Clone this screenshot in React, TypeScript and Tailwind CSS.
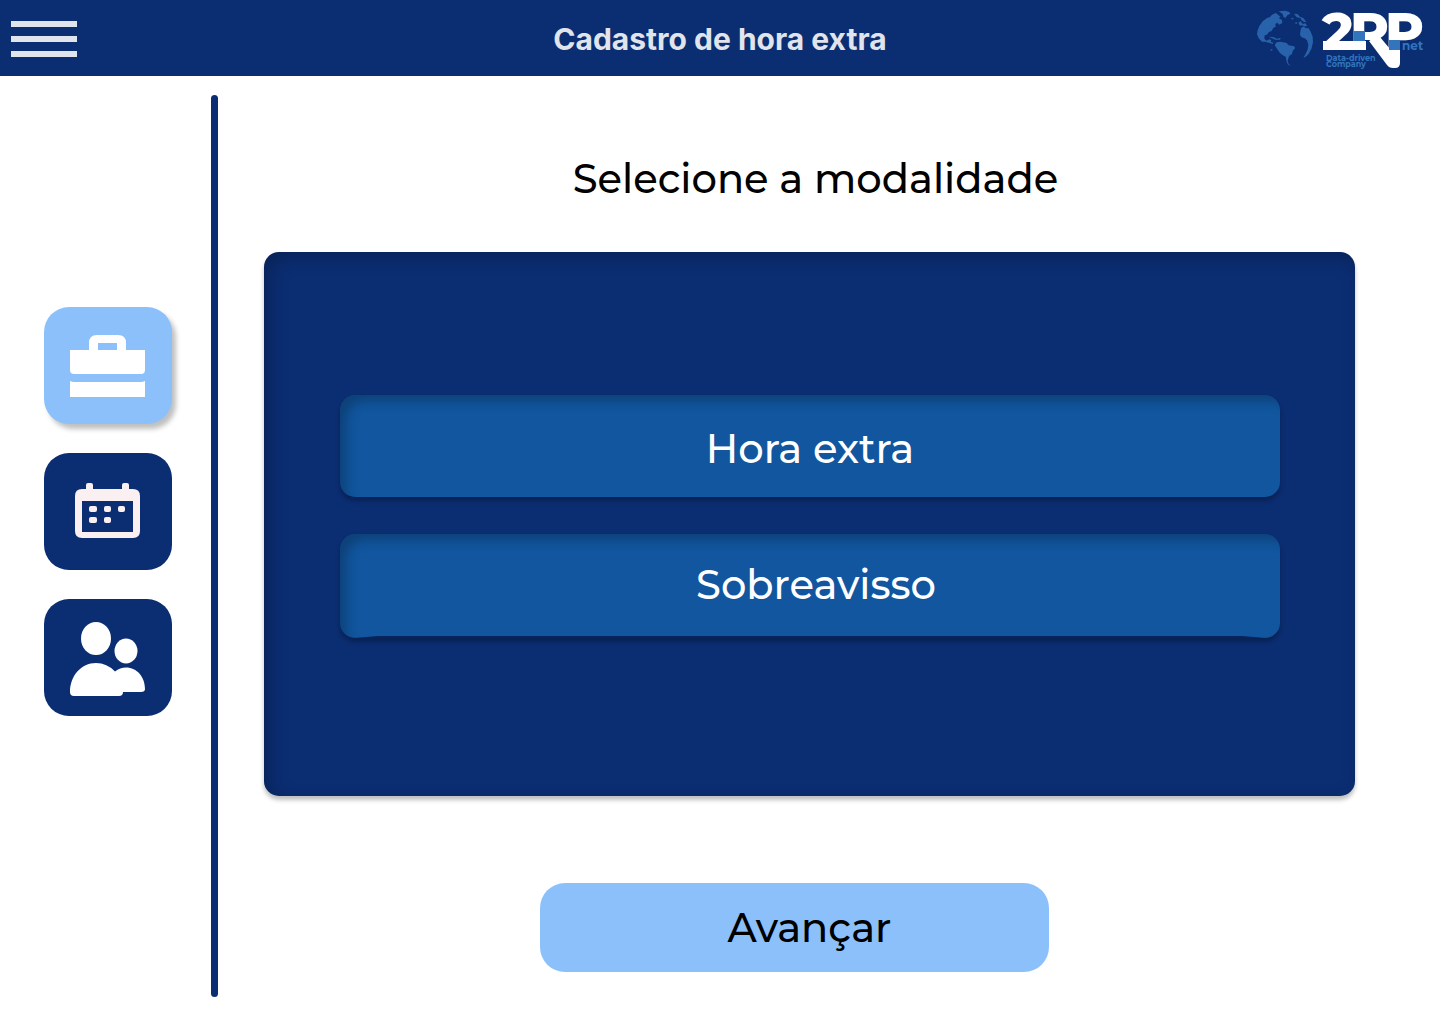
import React from "react";

function Logo() {
  return (
    <svg viewBox="0 -10 170 76" className="h-[76px] w-[170px] overflow-visible" role="img" aria-label="2RP net Data-driven Company">
      <g fill="#2862aa" transform="translate(-4 -4) scale(0.3333)">
        <path d="M15 85L17 72L22 60L32 46L45 36L54 33L60 26L72 21L78 26L86 33L80 36L90 42L91 51L82 56L76 50L70 54L71 62L63 67L60 74L50 79L45 86L38 88L37 98L44 104L52 100L58 102L56 107L64 110L62 114L50 110L40 107L30 107L20 97Z" />
        <path d="M80 16L100 14L112 18L115 23L106 28L100 36L94 32L92 24Z" />
        <path d="M50 92L66 94L74 98L86 96L84 101L70 101L60 97Z" />
        <path d="M68 117L74 109L84 107L94 109L104 111L110 118L127 121L129 127L122 135L120 144L112 149L109 157L107 164L110 175L118 181L108 176L104 167L101 152L90 146L82 139L76 130L72 124Z" />
        <path d="M126 23L136 24L144 32L154 36L163 48L156 48L148 42L146 36L134 34Z" />
        <path d="M139 50L146 46L152 54L160 52L166 60L158 61L150 58L144 59Z" />
        <path d="M145 78L147 66L156 61L160 66L170 67L176 77L182 92L183 108L179 127L170 144L161 152L154 156L161 143L167 130L169 116L165 103L158 97L149 94L144 87Z" />
        <path d="M56 130h5v4h-5zM130 49h5v4h-5zM118 36h6v4h-6z" />
      </g>
      <g fill="#fff" fontFamily="Montserrat, Inter, sans-serif" fontWeight="800" fontSize="53">
        <text x="66" y="40">2</text>
        <text x="94" y="40">R</text>
        <text x="129" y="40">P</text>
        <path d="M67 31H110V40H67Z" />
        <path d="M113 31L131 55Q133 58 137 58H139Q144 58 144 53V39H134L124 27Z" />
      </g>
      <path d="M98 21h11v10H98zM133 30h11v10h-11z" fill="#3275bd" />
      <g fill="#3275bd" fontFamily="Montserrat, Inter, sans-serif" fontWeight="700">
        <text x="146" y="40" fontSize="12">net</text>
        <text x="70" y="51" fontSize="8">Data-driven</text>
        <text x="70" y="57" fontSize="8">Company</text>
      </g>
    </svg>
  );
}

const BriefcaseIcon = () => (
  <svg viewBox="0 0 75 62" className="h-[62px] w-[75px]" fill="#fff" aria-hidden="true">
    <path fillRule="evenodd" d="M0 15h19V8q0-8 8-8h21q8 0 8 8v7h19v20q0 4-4 4H4q-4 0-4-4zM28 8v7h19V8z" />
    <path d="M0 46q2 1 4 1h67q2 0 4-1v16H0z" />
  </svg>
);

const CalendarIcon = () => (
  <svg viewBox="0 0 65 57" className="h-[57px] w-[65px]" fill="#faf0f2" aria-hidden="true">
    <path fillRule="evenodd" d="M7 6h4V2q0-2 2-2h3q2 0 2 2v4h29V2q0-2 2-2h3q2 0 2 2v4h4q7 0 7 7v35q0 7-7 7H7q-7 0-7-7V13q0-7 7-7zM7 18v31h51V18z" />
    <rect x="14" y="23" width="8" height="6" rx="2" />
    <rect x="29" y="23" width="7" height="6" rx="2" />
    <rect x="43" y="23" width="7" height="6" rx="2" />
    <rect x="14" y="34" width="8" height="6" rx="2" />
    <rect x="29" y="34" width="7" height="6" rx="2" />
  </svg>
);

const PeopleIcon = () => (
  <svg viewBox="0 -4 75 79" className="h-[79px] w-[75px]" fill="#fff" aria-hidden="true">
    <ellipse cx="26" cy="16.5" rx="15" ry="16.5" />
    <ellipse cx="56" cy="29" rx="11.5" ry="12.5" />
    <path d="M0 70C0 54 11 41 26 41Q37 41 45 49.500Q50 45.500 56 45.500C67 45.500 75 55 75 67Q75 70 71 70H53Q53 74 49 74H4Q0 74 0 70Z" />
  </svg>
);

const NAV = [
  { label: "Modalidade", Icon: BriefcaseIcon, look: "bg-[#8cc0fb] shadow-[4px_5px_5px_rgba(0,0,0,0.25)]" },
  { label: "Data", Icon: CalendarIcon, look: "bg-[#0b2d72]" },
  { label: "Equipe", Icon: PeopleIcon, look: "bg-[#0b2d72]" },
];

const OPTION =
  "relative w-full rounded-[15px] bg-[#11569f] text-[40px] leading-[48px] font-medium text-white shadow-[0_4px_4px_rgba(0,0,0,0.25),inset_10px_10px_12px_-4px_rgba(0,0,0,0.25)]";

export default function App() {
  return (
    <div className="flex min-h-screen flex-col bg-white font-['Montserrat','Inter',sans-serif] text-black">
      <header className="grid h-[76px] shrink-0 grid-cols-[1fr_auto_1fr] items-center bg-[#0b2d72]">
        <button type="button" aria-label="Menu" className="ml-[11px] flex w-[66px] flex-col gap-[9px] pt-px">
          <span className="h-[6px] bg-[#e0e4ed]" />
          <span className="h-[6px] bg-[#e0e4ed]" />
          <span className="h-[6px] bg-[#e0e4ed]" />
        </button>
        <h1 className="pt-px font-['Inter',sans-serif] text-[30px] leading-9 font-bold text-[#e0e4ed]">
          Cadastro de hora extra
        </h1>
        <div className="mr-[14px] justify-self-end">
          <Logo />
        </div>
      </header>

      <div className="flex flex-1">
        <nav className="flex w-[211px] shrink-0 flex-col gap-[29px] pt-[231px] pl-[44px]">
          {NAV.map(({ label, Icon, look }) => (
            <button
              key={label}
              type="button"
              aria-label={label}
              className={`flex h-[117px] w-[128px] items-center justify-center rounded-[25px] pr-px ${look}`}
            >
              <Icon />
            </button>
          ))}
        </nav>
        <div className="mt-[19px] mb-3 w-[7px] shrink-0 rounded-full bg-[#0b2d72]" />

        <main className="flex flex-1 flex-col items-center pt-[79px] pr-[85px] pb-[37px] pl-[46px]">
          <h2 className="pl-3 text-[40px] leading-[48px] font-medium">Selecione a modalidade</h2>
          <section className="mt-[49px] flex h-[544px] w-full flex-col gap-[37px] rounded-[15px] bg-[#0b2d72] pt-[143px] pr-[75px] pl-[76px] shadow-[0_4px_4px_rgba(0,0,0,0.25),inset_6px_6px_20px_-2px_rgba(0,0,0,0.25)]">
            <button type="button" className={`${OPTION} h-[102px] pt-[6px]`}>
              Hora extra
            </button>
            <button type="button" className={`${OPTION} h-[104px] pb-[2px] pl-3`}>
              Sobreavisso
              <span className="absolute inset-x-[14px] bottom-0 h-[2px] bg-[#08245c] [clip-path:polygon(24px_0,calc(100%-24px)_0,100%_100%,0_100%)]" />
            </button>
          </section>
          <button
            type="button"
            className="mt-[87px] mr-[30px] h-[89px] w-[509px] rounded-[25px] bg-[#8cc0fb] pl-[30px] text-[40px] leading-[48px] font-medium"
          >
            Avançar
          </button>
        </main>
      </div>
    </div>
  );
}
